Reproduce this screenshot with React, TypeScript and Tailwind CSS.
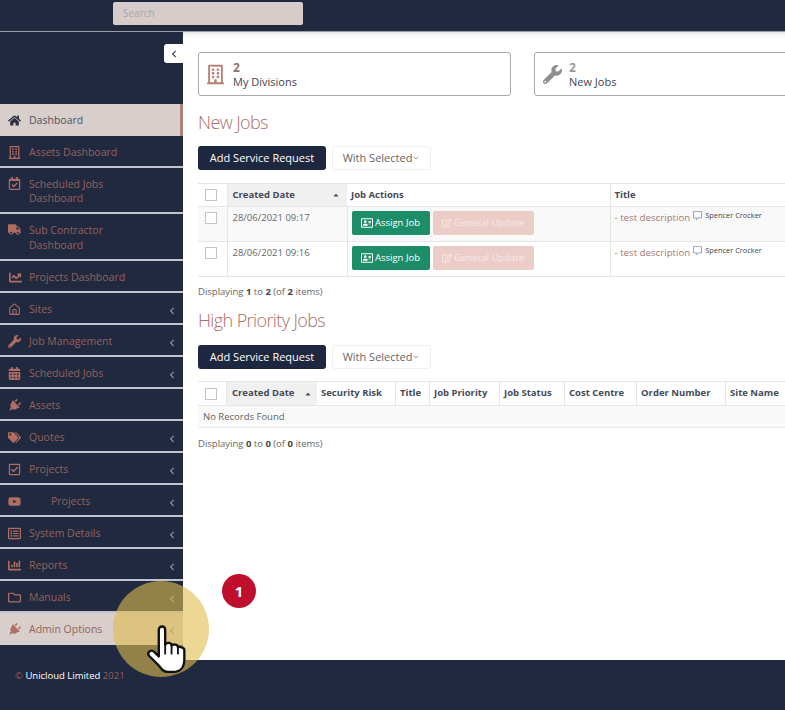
import React from 'react';
import {
  FaHome,
  FaRegBuilding,
  FaRegCalendarCheck,
  FaTruck,
  FaChartLine,
  FaWrench,
  FaCalendarAlt,
  FaPlug,
  FaTags,
  FaRegCheckSquare,
  FaYoutube,
  FaRegListAlt,
  FaChartBar,
  FaRegFolder,
  FaRegAddressCard,
  FaRegEdit,
  FaRegCommentAlt,
  FaChevronLeft,
  FaCaretUp,
} from 'react-icons/fa';
import { LuHouse, LuChevronDown } from 'react-icons/lu';

type NavItem = {
  label: string;
  icon: React.ComponentType<{ className?: string }>;
  arrow?: boolean;
  state?: 'active' | 'hover';
  height?: string;
  tall?: boolean;
  indent?: boolean;
  iconClass?: string;
};

const navItems: NavItem[] = [
  { label: 'Dashboard', icon: FaHome, state: 'active' },
  { label: 'Assets Dashboard', icon: FaRegBuilding },
  { label: 'Scheduled Jobs Dashboard', icon: FaRegCalendarCheck, tall: true, height: 'h-[46px]' },
  { label: 'Sub Contractor Dashboard', icon: FaTruck, tall: true, height: 'h-[47px]' },
  { label: 'Projects Dashboard', icon: FaChartLine, iconClass: 'w-[15px]' },
  { label: 'Sites', icon: LuHouse, arrow: true },
  { label: 'Job Management', icon: FaWrench, arrow: true },
  { label: 'Scheduled Jobs', icon: FaCalendarAlt, arrow: true },
  { label: 'Assets', icon: FaPlug, iconClass: 'rotate-45' },
  { label: 'Quotes', icon: FaTags, arrow: true },
  { label: 'Projects', icon: FaRegCheckSquare, arrow: true },
  { label: 'Projects', icon: FaYoutube, arrow: true, indent: true },
  { label: 'System Details', icon: FaRegListAlt, arrow: true },
  { label: 'Reports', icon: FaChartBar, arrow: true },
  { label: 'Manuals', icon: FaRegFolder, arrow: true },
  { label: 'Admin Options', icon: FaPlug, arrow: true, state: 'hover', iconClass: 'rotate-45' },
];

const SidebarItem: React.FC<{ item: NavItem }> = ({ item }) => {
  const Icon = item.icon;
  const light = item.state === 'active' || item.state === 'hover';
  return (
    <div
      className={`relative flex items-center pl-[29px] pr-2 shrink-0 text-[10.5px] leading-[14.5px] ${
        item.height ?? 'h-[32px]'
      } ${light ? 'bg-[#d8cecb]' : 'border-b-2 border-[#c3c4cc] pt-[2px]'} ${
        item.state === 'active' ? 'border-r-[3px] border-r-[#b57f75] text-[#4d5263]' : 'text-[#96625c]'
      }`}
    >
      <span className={`absolute left-[8px] ${item.tall ? 'top-[9px]' : 'top-[10px]'}`}>
        <Icon
          className={`h-[13px] ${item.iconClass?.includes('w-') ? '' : 'w-[13px]'} ${item.iconClass ?? ''} ${
            item.state === 'active' ? 'text-[#2a3040]' : 'text-[#b06e62]'
          }`}
        />
      </span>
      <span className={`${item.tall ? 'w-[90px]' : ''} ${item.indent ? 'ml-[22px]' : ''}`}>{item.label}</span>
      {item.arrow && <FaChevronLeft className="absolute left-[169px] top-[14px] w-[6px] h-[8px] text-[#8d8f9c]" />}
    </div>
  );
};

const StatCard: React.FC<{ icon: React.ReactNode; label: string; muted?: boolean }> = ({ icon, label, muted }) => (
  <div className="w-[313px] h-[44px] shrink-0 flex items-center gap-[9px] pl-[7px] bg-white border border-[#a9a9a9] rounded-[3px]">
    <span className="w-[18px] flex justify-center">{icon}</span>
    <div className="pt-[2px] text-[11px] leading-[14px] text-[#3f4452]">
      <div className={`font-bold text-[12px] ${muted ? 'text-[#9a9a9a]' : 'text-[#946f6a]'}`}>2</div>
      <div>{label}</div>
    </div>
  </div>
);

const Toolbar = () => (
  <div className="flex gap-[6px] items-center">
    <button className="w-[128px] h-[24px] bg-[#1e2740] text-white text-[11px] rounded-[3px]">Add Service Request</button>
    <button className="w-[99px] h-[24px] bg-white border border-[#efefef] rounded-[3px] text-[#666] text-[11px] flex items-center justify-center">
      With Selected
      <LuChevronDown className="w-[8px] h-[8px]" />
    </button>
  </div>
);

const Checkbox = () => <div className="w-[12px] h-[12px] border border-[#c4c4c4] bg-white" />;

const JobRow = ({ date, shaded }: { date: string; shaded?: boolean }) => (
  <tr className={`h-[35px] border-b border-[#e6e6e6] align-top ${shaded ? 'bg-[#f9f9f9]' : 'bg-white'}`}>
    <td className="border-r border-[#e6e6e6] pl-[7px] pt-[5px]">
      <Checkbox />
    </td>
    <td className="border-r border-[#e6e6e6] pl-[5px] pt-[4px] text-[#666]">{date}</td>
    <td className="border-r border-[#e6e6e6] pl-[4px] pt-[4px]">
      <div className="flex gap-[3px]">
        <span className="w-[78px] h-[24px] rounded-[2px] bg-[#1c8d68] text-white flex items-center justify-center gap-[2px]">
          <FaRegAddressCard className="w-[12px] h-[12px]" />
          Assign Job
        </span>
        <span className="w-[101px] h-[24px] rounded-[2px] bg-[#ecccc6] text-[#f7e9e6] flex items-center justify-center gap-[2px]">
          <FaRegEdit className="w-[10px] h-[10px]" />
          General Update
        </span>
      </div>
    </td>
    <td className="pl-[4px] pt-[3px] whitespace-nowrap text-[#a77972]">
      <span className="text-[9.7px]">- test description</span>
      <FaRegCommentAlt className="inline w-[9px] h-[9px] ml-[3px] mb-[5px] text-[#7b96c4]" />
      <span className="ml-[3px] text-[7.4px] text-[#444] align-[3px]">Spencer Crocker</span>
    </td>
  </tr>
);

const secondHeaders = [
  { label: 'Security Risk', w: 'w-[79px]' },
  { label: 'Title', w: 'w-[34px]' },
  { label: 'Job Priority', w: 'w-[70px]' },
  { label: 'Job Status', w: 'w-[65px]' },
  { label: 'Cost Centre', w: 'w-[72px]' },
  { label: 'Order Number', w: 'w-[89px]' },
  { label: 'Site Name', w: 'w-[80px]' },
];

const Displaying = ({ from, to, total }: { from: number; to: number; total: number }) => (
  <p className="text-[9.5px] text-[#666] leading-[13px]">
    Displaying <b className="text-[#444]">{from}</b> to <b className="text-[#444]">{to}</b> (of{' '}
    <b className="text-[#444]">{total}</b> items)
  </p>
);

export default function App() {
  return (
    <div className="relative w-[785px] h-[710px] overflow-hidden flex flex-col bg-white font-['Open_Sans',sans-serif]">
      {/* Top bar */}
      <header className="h-[32px] shrink-0 bg-[#20293f] border-b border-[#9a9ca6] pl-[113px] pt-[2px]">
        <div className="w-[190px] h-[23px] bg-[#d6cdcb] rounded-[2px] pl-[10px] text-[10px] leading-[23px] text-[#a9a5a5]">
          Search
        </div>
      </header>

      <div className="flex flex-1 min-h-0">
        {/* Sidebar */}
        <aside className="w-[183px] shrink-0 bg-[#20293f] flex flex-col">
          <div className="h-[72px] shrink-0 flex justify-end pt-[12px]">
            <div className="w-[19px] h-[19px] bg-white rounded-l-[3px] flex items-center justify-center">
              <FaChevronLeft className="w-[6px] h-[8px] text-[#444a5c]" />
            </div>
          </div>
          {navItems.map((item, i) => (
            <SidebarItem key={i} item={item} />
          ))}
        </aside>

        {/* Main */}
        <main className="flex-1 min-w-0 overflow-hidden pl-[15px] pt-[20px] shadow-[inset_0_6px_6px_-6px_rgba(0,0,0,0.2)]">
          <div className="flex gap-[23px] w-[700px]">
            <StatCard
              icon={<FaRegBuilding className="w-[17px] h-[21px] text-[#b57f75]" />}
              label="My Divisions"
            />
            <StatCard
              icon={<FaWrench className="ml-[3px] shrink-0 w-[19px] h-[19px] text-[#8f8f8f]" />}
              label="New Jobs"
              muted
            />
          </div>

          <h2 className="mt-[13px] h-[26px] text-[18px] leading-[26px] font-light tracking-[-0.6px] text-[#a9706a]">
            New Jobs
          </h2>
          <div className="mt-[11px]">
            <Toolbar />
          </div>

          <table className="mt-[13px] w-[700px] table-fixed border-collapse text-[9.5px] border-t border-[#e6e6e6]">
            <colgroup>
              <col className="w-[29px]" />
              <col className="w-[120px]" />
              <col className="w-[263px]" />
              <col />
            </colgroup>
            <thead>
              <tr className="h-[23px] border-b border-[#e6e6e6] text-[#444a58] text-left">
                <th className="border-r border-[#e6e6e6] pl-[7px] font-normal">
                  <Checkbox />
                </th>
                <th className="bg-[#f0f0f0] pl-[5px] pr-[7px] font-bold">
                  <div className="flex items-center justify-between">
                    Created Date
                    <FaCaretUp className="w-[8px] h-[8px]" />
                  </div>
                </th>
                <th className="border-r border-[#e6e6e6] pl-[4px] font-bold">Job Actions</th>
                <th className="pl-[4px] font-bold">Title</th>
              </tr>
            </thead>
            <tbody>
              <JobRow date="28/06/2021 09:17" shaded />
              <JobRow date="28/06/2021 09:16" />
            </tbody>
          </table>

          <div className="mt-[8px]">
            <Displaying from={1} to={2} total={2} />
          </div>

          <h2 className="mt-[9px] h-[26px] text-[18px] leading-[26px] font-light tracking-[-0.6px] text-[#a9706a]">
            High Priority Jobs
          </h2>
          <div className="mt-[12px]">
            <Toolbar />
          </div>

          <div className="mt-[12px] w-[700px] border-t border-[#e6e6e6] text-[9.5px]">
            <div className="flex h-[24px] items-center border-b border-[#e6e6e6] font-bold text-[#444a58]">
              <div className="w-[29px] h-full flex items-center pl-[7px] border-r border-[#e6e6e6]">
                <Checkbox />
              </div>
              <div className="w-[90px] h-full bg-[#f0f0f0] flex items-center justify-between pl-[5px] pr-[5px]">
                Created Date
                <FaCaretUp className="w-[8px] h-[8px]" />
              </div>
              {secondHeaders.map((h) => (
                <div key={h.label} className={`${h.w} h-full flex items-center pl-[4px] border-r border-[#e6e6e6] whitespace-nowrap`}>
                  {h.label}
                </div>
              ))}
            </div>
            <div className="h-[22px] bg-[#f9f9f9] border-b border-[#e6e6e6] pl-[5px] leading-[21px] text-[#666]">
              No Records Found
            </div>
          </div>

          <div className="mt-[9px]">
            <Displaying from={0} to={0} total={0} />
          </div>
        </main>
      </div>

      {/* Footer */}
      <footer className="h-[50px] shrink-0 bg-[#20293f] pl-[15px] pt-[9px] text-[9.5px] leading-[13px] text-[#90605c]">
        © <span className="text-white">Unicloud Limited</span> 2021
      </footer>

      {/* Tutorial overlay */}
      <div className="absolute left-[113px] top-[581px] w-[96px] h-[96px] rounded-full bg-[#e0bc4e]/60" />
      <div className="absolute left-[222px] top-[574px] w-[34px] h-[34px] rounded-full bg-[#c00f2d] text-white text-[15px] font-bold flex items-center justify-center">
        1
      </div>
      <svg className="absolute left-[146px] top-[625px] w-[42px] h-[50px]" viewBox="0 0 46 54">
        <path
          d="M14 5c0-5 7-5 7 0v16c2-3 7-2 7 1 2-2 7-1 7 2 2-1 7 0 7 3v10c0 8-4 14-12 14h-6c-5 0-7-3-10-7L3 33c-2-4 3-7 6-4l5 5z"
          fill="#fff"
          stroke="#111"
          strokeWidth="2.6"
          strokeLinejoin="round"
        />
        <path d="M21 21v10M28 22v9M35 24v7" stroke="#111" strokeWidth="2" strokeLinecap="round" />
      </svg>
    </div>
  );
}
